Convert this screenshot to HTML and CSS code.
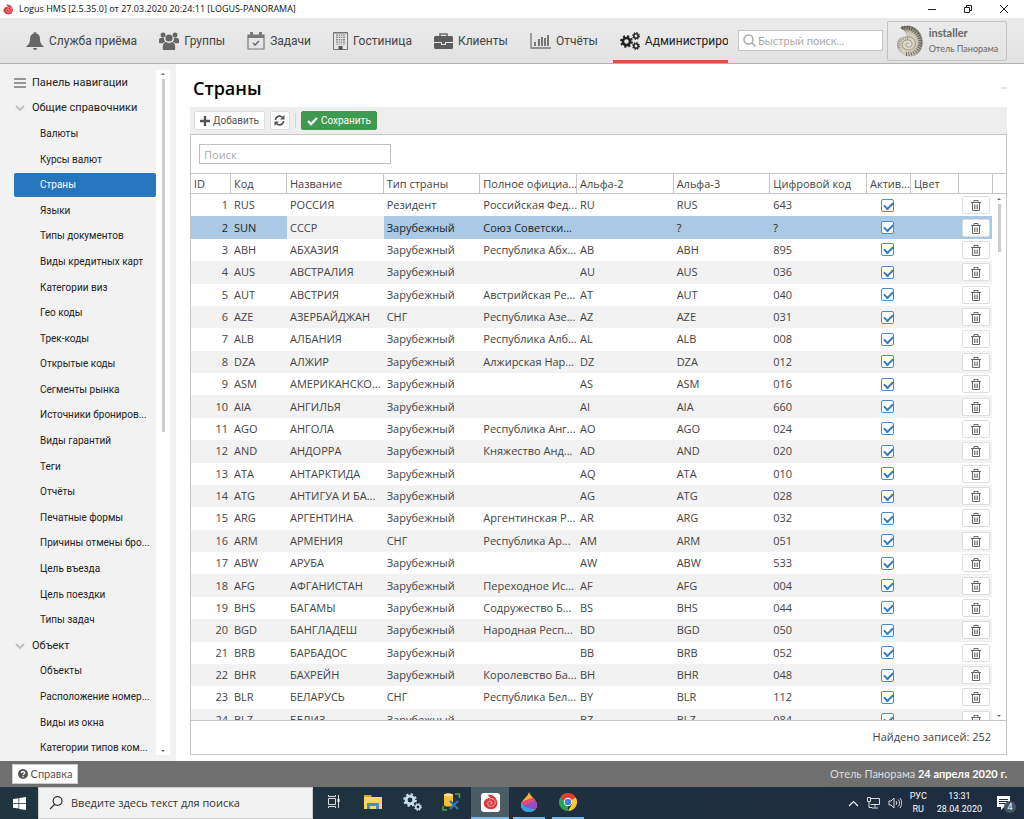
FILE: index.html
```html
<!DOCTYPE html>
<html lang="ru">
<head>
    <meta charset="utf-8">
    <title>Logus HMS</title>
    <link rel="stylesheet" href="styles.css">
</head>
<body>
    <svg class="defs" aria-hidden="true">
        <symbol id="i-shell" viewBox="0 0 20 20">
            <path fill="#d83a40" d="M6 1c3 0 6 0 8 2s4 5 4 8c0 5-3 8-8 8s-9-3-9-7c0-4 3-7 8-7-1-1-2-2-3-4z"/>
            <path fill="none" stroke="#f6b9bb" stroke-width="1.200" d="M8 6c5-1 8 2 7 6s-8 5-9 1 4-5 5-3-1 3-2 2"/>
        </symbol>
        <symbol id="i-trash" viewBox="0 0 12 12">
            <g fill="none" stroke="#666"><path d="M1 3.500h10M4 3V1.500h4V3M2.500 4v7.500h7V4"/><path d="M4.500 5.500v4.500M6 5.500v4.500M7.500 5.500v4.500" stroke-width=".8"/></g>
        </symbol>
        <symbol id="i-gear" viewBox="0 0 20 20">
            <circle cx="10" cy="10" r="5.500" fill="none" stroke="currentColor" stroke-width="4"/>
            <circle cx="10" cy="10" r="8.300" fill="none" stroke="currentColor" stroke-width="3" stroke-dasharray="3.260 3.260"/>
        </symbol>
        <radialGradient id="pearl" cx=".45" cy=".6" r=".6">
            <stop offset="0" stop-color="#e9e3d3"/>
            <stop offset=".6" stop-color="#cfc9b9"/>
            <stop offset="1" stop-color="#6e6a60"/>
        </radialGradient>
    </svg>

    <header class="titlebar">
        <svg class="logo"><use href="#i-shell"/></svg>
        <span class="window-title">Logus HMS [2.5.35.0] от 27.03.2020 20:24:11 [LOGUS-PANORAMA]</span>
        <div class="window-buttons">
            <button aria-label="Свернуть"><svg viewBox="0 0 10 10"><path d="M1 5.500h8"/></svg></button>
            <button aria-label="Окно"><svg viewBox="0 0 10 10"><path d="M1.500 3.500h5v5h-5zM3.500 3V1.500h5v5H7"/></svg></button>
            <button aria-label="Закрыть"><svg viewBox="0 0 10 10"><path d="M1 1l8 8M9 1L1 9"/></svg></button>
        </div>
    </header>

    <div class="topbar">
        <nav class="menu">
            <a href="#"><svg width="18" height="18" viewBox="0 0 18 18"><path fill="#666" d="M9 0c1 0 1.500.8 1.300 1.600C13 2.300 14 4.500 14 7c0 4 1.500 5.500 4 8H0c2.500-2.500 4-4 4-8 0-2.500 1-4.700 3.700-5.400C7.500.8 8 0 9 0zM7 16h4a2 2 0 0 1-4 0z"/></svg>Служба приёма</a>
            <a href="#"><svg width="20" height="18" viewBox="0 0 20 18"><g fill="#666"><circle cx="4" cy="3" r="2.500"/><circle cx="16" cy="3" r="2.500"/><circle cx="10" cy="6" r="3.600"/><path d="M0 11V8c0-2 2-2.500 5-2 0 2 .5 3 1.500 4-1.500 0-2 .5-3 1.500zM20 11V8c0-2-2-2.500-5-2 0 2-.5 3-1.500 4 1.500 0 2 .5 3 1.500zM4 18c-1-5 1-8 3-8 2 1.500 4 1.500 6 0 2 0 4 3 3 8z"/></g></svg>Группы</a>
            <a href="#"><svg width="18" height="18" viewBox="0 0 18 18"><path fill="none" stroke="#777" stroke-width="1.200" d="M1 3h16v14H1z"/><path fill="#777" d="M1 3h16v3H1zM3 0h3v4H3zM12 0h3v4h-3z"/><path fill="none" stroke="#666" stroke-width="1.500" d="M6 11l2 2 4-4"/></svg>Задачи</a>
            <a href="#"><svg width="15" height="18" viewBox="0 0 15 18"><path fill="none" stroke="#777" d="M.5.5h14v17H.5zM0 1h15"/><path stroke="#888" stroke-width="9" stroke-dasharray="1.300 1" d="M7.500 2.500v10"/><path stroke="#e8e8e8" stroke-width=".7" d="M5.500 2v11M7.500 2v11M9.500 2v11"/><path fill="#555" d="M5.500 14h4v4h-4z"/></svg>Гостиница</a>
            <a href="#"><svg width="19" height="16" viewBox="0 0 19 16"><path fill="none" stroke="#666" stroke-width="1.500" d="M6 4V1h7v3"/><path fill="#5c5c5c" d="M1 3h17l1 1v5H0V4zM0 10h7v2h5v-2h7v5l-1 1H1l-1-1zM8 9h3v2H8z"/></svg>Клиенты</a>
            <a href="#"><svg width="21" height="16" viewBox="0 0 21 16"><path fill="none" stroke="#777" stroke-width="1.300" d="M1 0v15h20"/><path fill="#777" d="M4 9h2v4H4zM8 6h2v7H8zM11 4h2v9h-2zM14 5h2v8h-2zM17 2h2v11h-2z"/></svg>Отчёты</a>
            <a href="#" class="current"><svg width="20" height="18" viewBox="0 0 20 18"><use href="#i-gear" x="0" y="3" width="13" height="13"/><use href="#i-gear" x="12" y="0" width="8" height="8"/><use href="#i-gear" x="12" y="10" width="8" height="8"/></svg>Администрирование</a>
        </nav>
        <label class="quick-search">
            <svg width="13" height="13" viewBox="0 0 13 13"><path fill="none" stroke="#aaa" stroke-width="1.500" d="M9 9l3.500 3.500M10 5.500a4.500 4.500 0 1 1-9 0a4.500 4.500 0 0 1 9 0z"/></svg>
            <input type="text" placeholder="Быстрый поиск..." aria-label="Быстрый поиск">
        </label>
        <button class="user">
            <svg class="avatar" viewBox="0 0 28 32">
                <path fill="url(#pearl)" d="M4 3C10-1 19 0 24 8s3 20-6 23C9 33 1 27 1 19c0-5 4-8 9-8 0-4-2-6-6-8z"/>
                <g fill="none">
                    <path stroke="#57534a" stroke-width="4" stroke-dasharray=".8 1.600" d="M6 3c9-2 17 5 18 13s-7 14-14 13"/>
                    <path stroke="#8a8576" stroke-width="3" stroke-dasharray=".7 1.500" d="M3 23c-2-6 3-11 9-10"/>
                    <path stroke="#9a9484" d="M10 12c6-1 11 3 9 9s-13 5-13-1 9-7 10-2-6 5-6 2 3-2 3-1"/>
                </g>
            </svg>
            <span class="user-text"><b>installer</b><span>Отель Панорама</span></span>
        </button>
    </div>

    <div class="workspace">
        <aside class="sidebar">
            <nav class="tree">
                <a href="#" class="group"><svg viewBox="0 0 12 12"><path stroke="#777" stroke-width="1.300" d="M0 2h12M0 6h12M0 10h12"/></svg>Панель навигации</a>
                <a href="#" class="group"><svg viewBox="0 0 12 12"><path fill="none" stroke="#bbb" stroke-width="1.800" d="M2 4l4 4 4-4"/></svg>Общие справочники</a>
                <a href="#">Валюты</a>
                <a href="#">Курсы валют</a>
                <a href="#" class="selected">Страны</a>
                <a href="#">Языки</a>
                <a href="#">Типы документов</a>
                <a href="#">Виды кредитных карт</a>
                <a href="#">Категории виз</a>
                <a href="#">Гео коды</a>
                <a href="#">Трек-коды</a>
                <a href="#">Открытые коды</a>
                <a href="#">Сегменты рынка</a>
                <a href="#">Источники брониров...</a>
                <a href="#">Виды гарантий</a>
                <a href="#">Теги</a>
                <a href="#">Отчёты</a>
                <a href="#">Печатные формы</a>
                <a href="#">Причины отмены бро...</a>
                <a href="#">Цель въезда</a>
                <a href="#">Цель поездки</a>
                <a href="#">Типы задач</a>
                <a href="#" class="group"><svg viewBox="0 0 12 12"><path fill="none" stroke="#bbb" stroke-width="1.800" d="M2 4l4 4 4-4"/></svg>Объект</a>
                <a href="#">Объекты</a>
                <a href="#">Расположение номер...</a>
                <a href="#">Виды из окна</a>
                <a href="#">Категории типов ком...</a>
            </nav>
            <div class="scrollbar"><span class="up"></span><span class="thumb"></span><span class="down"></span></div>
        </aside>

        <main class="content">
            <div class="heading"><h1>Страны</h1><span class="collapse"></span></div>
            <div class="toolbar">
                <button><svg width="10" height="10" viewBox="0 0 10 10"><path stroke="#555" stroke-width="2.400" d="M5 0v10M0 5h10"/></svg>Добавить</button>
                <button class="refresh" aria-label="Обновить"><svg width="11" height="11" viewBox="0 0 11 11"><path fill="none" stroke="#555" stroke-width="1.600" d="M1.500 5a4 4 0 0 1 7-2.500M9.500 6a4 4 0 0 1-7 2.500"/><path fill="#555" d="M10.500 0v4.500H6zM.5 11V6.500H5z"/></svg></button>
                <span class="separator"></span>
                <button class="save"><svg width="11" height="10" viewBox="0 0 11 10"><path fill="none" stroke="#fff" stroke-width="2.400" d="M1 5l3 3 6-6"/></svg>Сохранить</button>
            </div>
            <section class="panel">
                <div class="filter"><input type="text" placeholder="Поиск" aria-label="Поиск"></div>
                <div class="grid">
                    <table>
                        <colgroup>
                            <col class="c-id"><col class="c-code"><col><col><col><col><col><col>
                            <col class="c-active"><col class="c-color"><col class="c-del"><col class="c-end">
                        </colgroup>
                        <thead>
                            <tr><th>ID</th><th>Код</th><th>Название</th><th>Тип страны</th><th>Полное официа...</th><th>Альфа-2</th><th>Альфа-3</th><th>Цифровой код</th><th>Актив...</th><th>Цвет</th><th></th><th></th></tr>
                        </thead>
                        <tbody id="rows"></tbody>
                    </table>
                    <div class="scrollbar"><span class="up"></span><span class="thumb"></span><span class="down"></span></div>
                </div>
                <div class="summary">Найдено записей: 252</div>
            </section>
        </main>
    </div>

    <footer class="statusbar">
        <button><svg width="10" height="10" viewBox="0 0 10 10"><circle cx="5" cy="5" r="5" fill="#555"/><path fill="none" stroke="#fff" stroke-width="1.300" d="M3.300 4c0-2 3.400-2 3.400 0C6.700 5 5 5 5 6.200M5 7v1.300"/></svg>Справка</button>
        <span>Отель Панорама <b>24 апреля 2020 г.</b></span>
    </footer>

    <div class="taskbar">
        <button class="start" aria-label="Пуск"><svg width="13" height="13" viewBox="0 0 13 13"><path fill="#fff" d="M0 2l5.500-.8V6H0zM6.200 1L13 0v6H6.200zM0 6.700h5.500v4.900L0 10.800zM6.200 6.700H13V13l-6.800-1z"/></svg></button>
        <label class="task-search">
            <svg width="14" height="14" viewBox="0 0 14 14"><path fill="none" stroke="#333" stroke-width="1.200" d="M5.500 8.500L1 13M13 5a4.400 4.400 0 1 1-8.800 0A4.400 4.400 0 0 1 13 5z"/></svg>
            <input type="text" placeholder="Введите здесь текст для поиска" aria-label="Поиск в Windows">
        </label>
        <div class="apps">
            <button aria-label="Представление задач"><svg width="14" height="14" viewBox="0 0 14 14"><path fill="none" stroke="#ddd" d="M1.500 3.500h7v6h-7zM1.500 0v1.500h7V0M1.500 13v-1.500h7V13M11.500 0v13"/><path fill="#fff" d="M10.500 4h2v3h-2z"/></svg></button>
            <button aria-label="Проводник"><svg width="18" height="16" viewBox="0 0 18 16"><path fill="#e0a32c" d="M0 1h7l1 2H0z"/><path fill="#fbd667" d="M0 3h18v12H0z"/><path fill="#3d8fcf" d="M3 15V9h12v6h-3v-3H6v3z"/></svg></button>
            <button class="services" aria-label="Службы"><svg width="19" height="18" viewBox="0 0 19 18"><use href="#i-gear" width="14" height="14"/><use href="#i-gear" x="11" y="10" width="8" height="8"/></svg></button>
            <button aria-label="База данных"><svg width="19" height="18" viewBox="0 0 19 18"><path fill="#f4c22f" d="M2 2c0-2 9-2 9 0v10c0 2-9 2-9 0z"/><path fill="#ffe28a" d="M2 2c0-2 9-2 9 0s-9 2-9 0z"/><path fill="none" stroke="#4fa551" stroke-width="1.500" d="M13 1h4.500v4M1 13v4h4"/><path stroke="#2c74b8" stroke-width="2.200" d="M8 8l8 8M16 8l-8 8"/></svg></button>
            <button class="active" aria-label="Logus"><svg width="19" height="19" viewBox="0 0 19 19"><rect width="19" height="19" rx="3" fill="#fff"/><use href="#i-shell" x="2" y="1" width="16" height="16"/></svg></button>
            <button class="running" aria-label="Paint 3D"><svg width="16" height="20" viewBox="0 0 16 20"><defs><clipPath id="drop"><path d="M8 0c1 4 8 8 8 13a8 7 0 0 1-16 0C0 8 7 5 8 0z"/></clipPath></defs><g clip-path="url(#drop)"><path fill="#f5b52c" d="M0 0h16v20H0z"/><path fill="#e5497a" d="M0 10l16-6v16H0z"/><path fill="#8b50c8" d="M0 15l16-7v12H0z"/><path fill="#29a9e0" d="M0 10c3 5 6 7 14 7v3H0z"/></g></svg></button>
            <button class="running" aria-label="Chrome"><svg width="18" height="18" viewBox="0 0 18 18"><path fill="#e33b2e" d="M9 9L1.200 4.500A9 9 0 0 1 16.800 4.500z"/><path fill="#2ba24c" d="M9 9v9A9 9 0 0 1 1.200 4.500z"/><path fill="#fcc934" d="M9 9l7.800-4.500A9 9 0 0 1 9 18l4-7z"/><circle cx="9" cy="9" r="4.200" fill="#fff"/><circle cx="9" cy="9" r="3.300" fill="#3f7ee8"/></svg></button>
        </div>
        <div class="tray">
            <svg width="11" height="11" viewBox="0 0 11 11"><path fill="none" stroke="#fff" stroke-width="1.100" d="M1 8l4.500-4.500L10 8"/></svg>
            <svg width="13" height="12" viewBox="0 0 13 12"><path fill="none" stroke="#ddd" d="M3.500 1.500h9v6h-9M8 8v2.500M5 11h6M.5.5h3v4h-3zM2 5v5.500h3"/></svg>
            <svg width="14" height="12" viewBox="0 0 14 12"><path fill="none" stroke="#ddd" d="M1 4h2l3-3v10L3 8H1zM8 4c1 1 1 3 0 4M10 2.500c2 2 2 5 0 7M12 1c2.200 3 2.200 7 0 10"/></svg>
            <span class="lang">РУС<br>RU</span>
            <span class="clock">13:31<br>28.04.2020</span>
            <span class="notes"><svg width="13" height="14" viewBox="0 0 13 14"><path fill="#fff" d="M0 0h13v11H7l-3 3v-3H0z"/><path stroke="#1e3040" d="M2 3.500h9M2 5.500h9M2 7.500h6"/></svg><i>4</i></span>
        </div>
    </div>

    <script>
        const Z = 'Зарубежный';
        // код, название, тип, полное название, альфа-2, альфа-3, цифровой код
        const countries = [
            ['RUS', 'РОССИЯ', 'Резидент', 'Российская Фед...', 'RU', 'RUS', '643'],
            ['SUN', 'СССР', Z, 'Союз Советски...', '', '?', '?'],
            ['ABH', 'АБХАЗИЯ', Z, 'Республика Абх...', 'AB', 'ABH', '895'],
            ['AUS', 'АВСТРАЛИЯ', Z, '', 'AU', 'AUS', '036'],
            ['AUT', 'АВСТРИЯ', Z, 'Австрийская Ре...', 'AT', 'AUT', '040'],
            ['AZE', 'АЗЕРБАЙДЖАН', 'СНГ', 'Республика Азе...', 'AZ', 'AZE', '031'],
            ['ALB', 'АЛБАНИЯ', Z, 'Республика Алб...', 'AL', 'ALB', '008'],
            ['DZA', 'АЛЖИР', Z, 'Алжирская Нар...', 'DZ', 'DZA', '012'],
            ['ASM', 'АМЕРИКАНСКО...', Z, '', 'AS', 'ASM', '016'],
            ['AIA', 'АНГИЛЬЯ', Z, '', 'AI', 'AIA', '660'],
            ['AGO', 'АНГОЛА', Z, 'Республика Анг...', 'AO', 'AGO', '024'],
            ['AND', 'АНДОРРА', Z, 'Княжество Анд...', 'AD', 'AND', '020'],
            ['ATA', 'АНТАРКТИДА', Z, '', 'AQ', 'ATA', '010'],
            ['ATG', 'АНТИГУА И БА...', Z, '', 'AG', 'ATG', '028'],
            ['ARG', 'АРГЕНТИНА', Z, 'Аргентинская Р...', 'AR', 'ARG', '032'],
            ['ARM', 'АРМЕНИЯ', 'СНГ', 'Республика Ар...', 'AM', 'ARM', '051'],
            ['ABW', 'АРУБА', Z, '', 'AW', 'ABW', '533'],
            ['AFG', 'АФГАНИСТАН', Z, 'Переходное Ис...', 'AF', 'AFG', '004'],
            ['BHS', 'БАГАМЫ', Z, 'Содружество Б...', 'BS', 'BHS', '044'],
            ['BGD', 'БАНГЛАДЕШ', Z, 'Народная Респ...', 'BD', 'BGD', '050'],
            ['BRB', 'БАРБАДОС', Z, '', 'BB', 'BRB', '052'],
            ['BHR', 'БАХРЕЙН', Z, 'Королевство Ба...', 'BH', 'BHR', '048'],
            ['BLR', 'БЕЛАРУСЬ', 'СНГ', 'Республика Бел...', 'BY', 'BLR', '112'],
            ['BLZ', 'БЕЛИЗ', Z, '', 'BZ', 'BLZ', '084']
        ];

        document.getElementById('rows').innerHTML = countries.map((c, i) => `
            <tr${i === 1 ? ' class="selected"' : ''}>
                <td>${i + 1}</td>${c.map(v => `<td>${v}</td>`).join('')}
                <td class="check"><input type="checkbox" aria-label="Активна" checked></td>
                <td></td>
                <td class="del"><button aria-label="Удалить"><svg><use href="#i-trash"/></svg></button></td>
                <td></td>
            </tr>`).join('');
    </script>
</body>
</html>
```
FILE: styles.css
```css
* {
    box-sizing: border-box;
}
body {
    margin: 0;
    height: 100vh;
    display: flex;
    flex-direction: column;
    overflow: hidden;
    font-family: "Open Sans", "Noto Sans", sans-serif;
    font-size: 11px;
    line-height: 16px;
    color: #444;
    background: #fff;
}
button, input {
    font: inherit;
    color: inherit;
    margin: 0;
}
button {
    display: flex;
    align-items: center;
    justify-content: center;
    border: none;
    background: none;
    padding: 0;
    white-space: nowrap;
}
a {
    color: inherit;
    text-decoration: none;
}
svg {
    flex: none;
}
.defs {
    position: absolute;
    width: 0;
    height: 0;
}

/* window title */
.titlebar {
    flex: none;
    height: 18px;
    display: flex;
    align-items: center;
    padding: 0 15px 0 3px;
    gap: 5px;
    font-size: 9px;
    color: #111;
}
.logo {
    width: 11px;
    height: 11px;
}
.window-title {
    flex: 1;
}
.window-buttons {
    display: flex;
    gap: 26px;
}
.window-buttons svg {
    width: 10px;
    height: 10px;
    fill: none;
    stroke: #222;
}

/* main menu */
.topbar {
    flex: none;
    height: 46px;
    display: flex;
    align-items: center;
    padding-right: 17px;
    background: linear-gradient(#ebebeb, #e2e2e2);
    border-bottom: 1px solid #b0b0b0;
}
.menu {
    flex: 1;
    min-width: 0;
    align-self: stretch;
    display: flex;
    gap: 8px;
    padding-left: 19px;
    margin-right: 10px;
    overflow: hidden;
    font-family: Roboto, sans-serif;
    font-size: 12px;
}
.menu a {
    flex: none;
    display: flex;
    align-items: center;
    gap: 5px;
    padding: 0 7px;
    white-space: nowrap;
}
.menu .current {
    flex: 1 1 0;
    min-width: 0;
    overflow: hidden;
    padding-right: 0;
    color: #222;
    border-bottom: 3px solid #dc5141;
    padding-top: 3px;
}
.quick-search {
    width: 145px;
    height: 21px;
    display: flex;
    align-items: center;
    gap: 2px;
    padding: 0 4px;
    margin-right: 4px;
    background: #fff;
    border: 1px solid #c4c4c4;
    font-family: Lato, Roboto, sans-serif;
}
.quick-search input {
    flex: 1;
    min-width: 0;
    border: none;
    padding: 0;
    outline: none;
    background: none;
}
::placeholder {
    color: #aaa;
}
.user {
    width: 120px;
    height: 40px;
    gap: 5px;
    border: 1px solid #c2c2c2;
    border-radius: 2px;
    color: #666;
}
.avatar {
    width: 28px;
    height: 32px;
}
.user-text {
    display: flex;
    flex-direction: column;
    text-align: left;
    font-family: Lato, Roboto, sans-serif;
}
.user-text span {
    font-size: 9px;
}

/* navigation tree */
.workspace {
    flex: 1;
    min-height: 0;
    display: flex;
}
.sidebar {
    width: 176px;
    flex: none;
    display: flex;
    padding: 6px 6px 6px 14px;
    background: #f2f2f2;
}
.tree {
    flex: 1;
    min-width: 0;
    display: grid;
    grid-auto-rows: 1fr;
    font-family: Roboto, sans-serif;
    font-size: 10px;
    color: #222;
    margin-bottom: -6px;
}
.tree a {
    display: flex;
    align-items: center;
    padding-left: 26px;
    margin: 1px 0;
    min-height: 0;
    white-space: nowrap;
}
.tree .group {
    padding-left: 0;
    gap: 6px;
    font-size: 11px;
}
.tree .group svg {
    width: 12px;
    height: 12px;
}
.tree .selected {
    background: #2775bc;
    color: #fff;
    border-radius: 2px;
}
.scrollbar {
    width: 14px;
    display: flex;
    flex-direction: column;
    align-items: center;
    background: #fff;
    padding: 3px 0;
}
.scrollbar .up, .scrollbar .down {
    border: 2px solid transparent;
    border-top: none;
    border-bottom: 2px solid #666;
}
.scrollbar .down {
    border-top: 2px solid #666;
    border-bottom: none;
    margin-top: auto;
}
.scrollbar .thumb {
    width: 3px;
    height: 52%;
    margin-top: 4px;
    background: #ccc;
}

/* content */
.content {
    flex: 1;
    min-width: 0;
    display: flex;
    flex-direction: column;
    padding: 0 17px 6px 14px;
}
.heading {
    height: 43px;
    display: flex;
    align-items: center;
    justify-content: space-between;
    padding: 4px 0 0 3px;
}
h1 {
    margin: 0;
    font-size: 18px;
    line-height: 24px;
    font-weight: 600;
    color: #000;
}
.collapse {
    width: 6px;
    height: 2px;
    background: #e4e4e4;
}
.toolbar {
    flex: none;
    height: 27px;
    display: flex;
    align-items: center;
    gap: 5px;
    padding: 0 4px;
    background: #eee;
    font-family: Roboto, sans-serif;
    font-size: 10px;
}
.toolbar button {
    height: 19px;
    gap: 3px;
    padding: 0 5px;
    background: #fff;
    border: 1px solid #ddd;
    border-radius: 2px;
    color: #555;
}
.toolbar .refresh {
    width: 20px;
}
.toolbar .save {
    background: #3d9a50;
    border-color: #3d9a50;
    color: #fff;
}
.separator {
    width: 1px;
    height: 15px;
    background: #d4d4d4;
}
.panel {
    flex: 1;
    min-height: 0;
    display: flex;
    flex-direction: column;
    border: 1px solid #c6c6c6;
}
.filter {
    height: 38px;
    padding: 9px 8px;
}
.filter input {
    width: 192px;
    height: 20px;
    padding: 0 4px;
    border: 1px solid #c0c0c0;
    outline: none;
}
.grid {
    flex: 1;
    min-height: 0;
    position: relative;
    overflow: hidden;
    border-top: 1px solid #c6c6c6;
}
table {
    width: 100%;
    height: 557px;
    table-layout: fixed;
    border-collapse: separate;
    border-spacing: 0;
}
.c-id { width: 40px; }
.c-code { width: 56px; }
.c-active { width: 44px; }
.c-color { width: 48px; }
.c-del { width: 34px; }
.c-end { width: 13px; }
th, td {
    padding: 0 0 0 3px;
    text-align: left;
    font-weight: normal;
    white-space: nowrap;
    overflow: hidden;
}
th {
    height: 20px;
    line-height: 18px;
    border-right: 1px solid #c6c6c6;
    border-bottom: 1px solid #c6c6c6;
}
th:last-child {
    border-right: none;
}
td:first-child {
    text-align: right;
    padding: 0 3px 0 0;
}
tbody tr:nth-child(even) td {
    background: #f2f2f2;
}
tbody .selected td:not(:nth-child(3)) {
    background: #a9c9e5;
    color: #222;
}
tbody tr td:last-child, tbody .selected td:last-child {
    background: #fff !important;
}
td.check {
    padding: 0 4px 0 0;
}
.check input {
    appearance: none;
    display: block;
    position: relative;
    width: 13px;
    height: 13px;
    margin: 0 auto;
    background: #fff;
    border: 1px solid #4a8dc7;
    border-radius: 2px;
}
.check input:checked::after {
    content: "";
    position: absolute;
    left: 2px;
    top: 2px;
    width: 7px;
    height: 4px;
    border: solid #2f7cc0;
    border-width: 0 0 2px 2px;
    transform: rotate(-45deg);
}
.del {
    padding: 0 3px;
}
.del button {
    width: 28px;
    height: 18px;
    background: #fff;
    border: 1px solid #ddd;
    border-radius: 2px;
}
.del svg {
    width: 12px;
    height: 12px;
}
.grid .scrollbar {
    position: absolute;
    top: 21px;
    right: 0;
    bottom: 0;
}
.grid .scrollbar .thumb {
    height: 48px;
}
.summary {
    flex: none;
    height: 34px;
    padding: 8px 15px;
    border-top: 1px solid #c6c6c6;
    text-align: right;
}

/* status bar */
.statusbar {
    flex: none;
    height: 26px;
    display: flex;
    align-items: center;
    justify-content: space-between;
    padding: 0 17px 0 12px;
    background: #707070;
    color: #ddd;
    font-family: Lato, Roboto, sans-serif;
}
.statusbar b {
    color: #fff;
}
.statusbar button {
    width: 66px;
    height: 20px;
    gap: 3px;
    background: #fff;
    border: 1px solid #ccc;
    color: #555;
}

/* windows taskbar */
.taskbar {
    flex: none;
    height: 32px;
    display: flex;
    background: linear-gradient(90deg, #20353f, #1d2c3f);
    color: #fff;
}
.start {
    width: 38px;
}
.task-search {
    width: 275px;
    display: flex;
    align-items: center;
    gap: 8px;
    padding: 0 10px;
    background: #f2f2f2;
    border: 1px solid #ccc;
}
.task-search input {
    flex: 1;
    min-width: 0;
    padding: 0;
    border: none;
    outline: none;
    background: none;
    color: #333;
}
.task-search ::placeholder {
    color: #333;
}
.apps {
    flex: 1;
    display: flex;
    gap: 1px;
    padding-left: 2px;
}
.apps button {
    width: 38px;
    border-bottom: 2px solid transparent;
}
.services {
    color: #c8dfee;
}
.apps .active {
    background: #4c5c65;
    border-color: #76b9ed;
}
.apps .running {
    width: 32px;
    margin: 0 3px;
    border-color: #76b9ed;
}
.tray {
    display: flex;
    align-items: center;
    gap: 8px;
    padding-right: 14px;
    font-family: Roboto, sans-serif;
    font-size: 9px;
    line-height: 13px;
    text-align: center;
}
.clock {
    margin-left: 2px;
}
.notes {
    position: relative;
    margin-left: 7px;
}
.notes svg {
    display: block;
}
.notes i {
    position: absolute;
    left: 7px;
    top: 5px;
    width: 12px;
    height: 12px;
    line-height: 12px;
    border-radius: 50%;
    background: #4a5560;
    font-style: normal;
}
```
